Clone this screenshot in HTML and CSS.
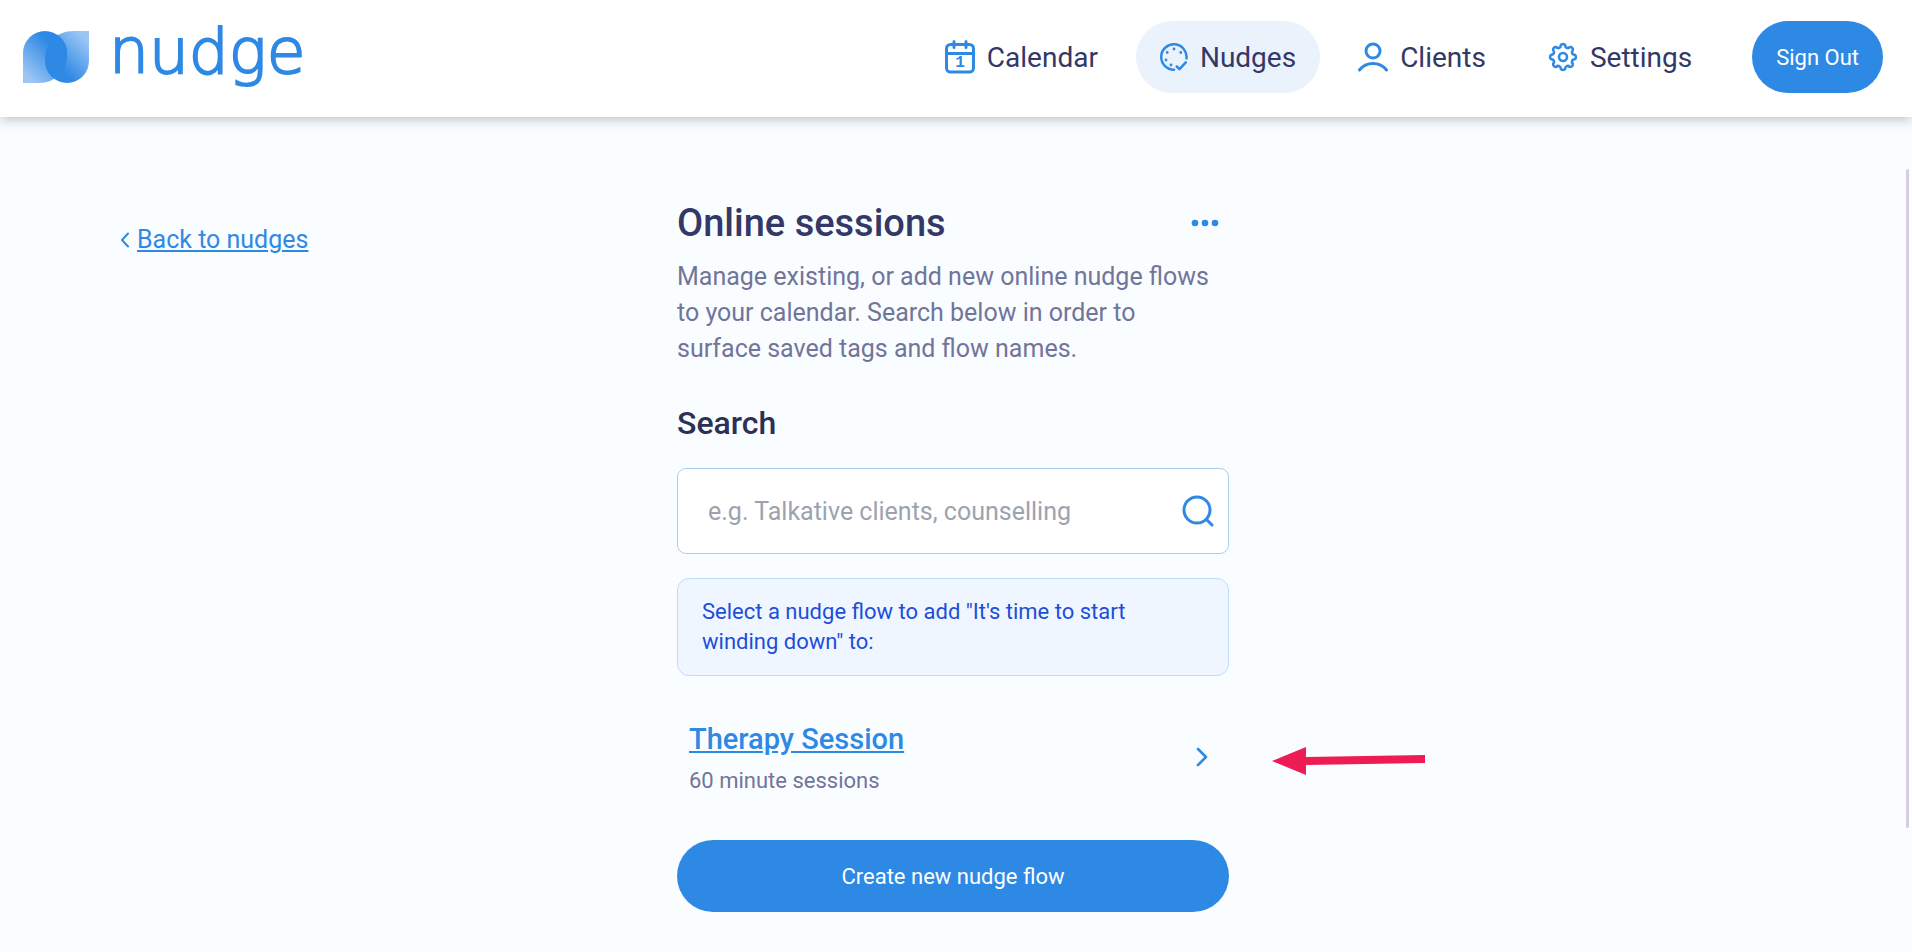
FILE: index.html
```html
<!DOCTYPE html>
<html lang="en">
<head>
    <meta charset="UTF-8">
    <meta name="viewport" content="width=device-width, initial-scale=1.0">
    <title>Online sessions - nudge</title>
    <link rel="stylesheet" href="styles.css">
</head>
<body>
    <header class="header">
        <a href="#" class="logo">
            <svg class="logo-mark" viewBox="0 0 66 52" aria-hidden="true">
                <defs>
                    <linearGradient id="fade" x1="34" y1="14" x2="4" y2="44" gradientUnits="userSpaceOnUse">
                        <stop offset="0.1" stop-color="#2e89e5"/>
                        <stop offset="1" stop-color="#9ac5f5"/>
                    </linearGradient>
                    <path id="leaf" d="M0 52V22A22 22 0 0 1 44 22V24C44 40 32 52 16 52Z"/>
                    <clipPath id="leaf-clip"><use href="#leaf"/></clipPath>
                </defs>
                <use href="#leaf" fill="url(#fade)" transform="rotate(180 33 26)"/>
                <use href="#leaf" fill="url(#fade)"/>
                <g clip-path="url(#leaf-clip)">
                    <use href="#leaf" fill="#2e89e5" transform="rotate(180 33 26)"/>
                </g>
            </svg>
            <span class="logo-text">nudge</span>
        </a>
        <nav class="nav">
            <a href="#" class="nav-link">
                <svg class="icon" viewBox="0 0 30 34" width="30" height="34" aria-hidden="true">
                    <rect x="1.5" y="4.5" width="27" height="27.5" rx="4"/>
                    <path d="M1.5 13.5h27M9 1.5v6M21 1.5v6"/>
                    <text x="15" y="27" class="icon-day">1</text>
                </svg>
                Calendar
            </a>
            <a href="#" class="nav-link active">
                <svg class="icon" viewBox="0 0 28 28" width="28" height="28" aria-hidden="true">
                    <path stroke-width="2.5" d="M26.5 15.5A12.7 12.7 0 1 0 14 26.7M16.8 23.5l2.7 2.7 6.3-6.8"/>
                    <path stroke-width="2.8" d="M14 6h.01M7.2 9.5h.01M20.8 9.5h.01M6 17h.01M11 22h.01"/>
                </svg>
                Nudges
            </a>
            <a href="#" class="nav-link">
                <svg class="icon" viewBox="0 0 30 30" width="30" height="30" aria-hidden="true">
                    <circle cx="15" cy="9" r="7"/>
                    <path d="M1.5 28C5 23.5 9.5 21.5 15 21.5S25 23.5 28.5 28"/>
                </svg>
                Clients
            </a>
            <a href="#" class="nav-link">
                <svg class="icon" viewBox="1 1 30 30" width="30" height="30" aria-hidden="true">
                    <path stroke-width="2.6" d="M27.58 13.75A2.5 2.5 0 0 1 27.58 18.25A2.5 2.5 0 0 0 25.78 22.6A2.5 2.5 0 0 1 22.6 25.78A2.5 2.5 0 0 0 18.25 27.58A2.5 2.5 0 0 1 13.75 27.58A2.5 2.5 0 0 0 9.4 25.78A2.5 2.5 0 0 1 6.22 22.6A2.5 2.5 0 0 0 4.42 18.25A2.5 2.5 0 0 1 4.42 13.75A2.5 2.5 0 0 0 6.22 9.4A2.5 2.5 0 0 1 9.4 6.22A2.5 2.5 0 0 0 13.75 4.42A2.5 2.5 0 0 1 18.25 4.42A2.5 2.5 0 0 0 22.6 6.22A2.5 2.5 0 0 1 25.78 9.4A2.5 2.5 0 0 0 27.58 13.75Z"/>
                    <circle cx="16" cy="16" r="4" stroke-width="2.6"/>
                </svg>
                Settings
            </a>
            <button type="button" class="btn btn-signout">Sign Out</button>
        </nav>
    </header>

    <main class="main">
        <div class="side">
            <a href="#" class="back">
                <svg class="icon" viewBox="0 0 8 16" width="8" height="16" aria-hidden="true">
                    <path stroke-width="2" d="M7 1.5L1 8L7 14.5"/>
                </svg>
                <span>Back to nudges</span>
            </a>
        </div>

        <section class="content">
            <div class="title-row">
                <h1>Online sessions</h1>
                <button type="button" class="more" aria-label="More options">
                    <svg viewBox="0 0 28 8" width="28" height="8" aria-hidden="true">
                        <circle cx="4" cy="4" r="3.3"/>
                        <circle cx="14" cy="4" r="3.3"/>
                        <circle cx="24" cy="4" r="3.3"/>
                    </svg>
                </button>
            </div>
            <p class="intro">Manage existing, or add new online nudge flows to your calendar. Search below in order to surface saved tags and flow names.</p>

            <label class="search-label" for="search">Search</label>
            <div class="search-box">
                <input type="text" id="search" placeholder="e.g. Talkative clients, counselling">
                <button type="button" class="search-btn" aria-label="Search">
                    <svg class="icon" viewBox="0 0 32 32" width="32" height="32" aria-hidden="true">
                        <circle cx="15" cy="15" r="13"/>
                        <path d="M24.5 24.5L30 30"/>
                    </svg>
                </button>
            </div>

            <div class="notice">Select a nudge flow to add "It's time to start winding down" to:</div>

            <div class="flow">
                <div>
                    <a href="#" class="flow-name">Therapy Session</a>
                    <p class="flow-info">60 minute sessions</p>
                </div>
                <svg class="icon" viewBox="0 0 12 20" width="12" height="20" aria-hidden="true">
                    <path stroke-width="2.6" d="M2 2L10 10L2 18"/>
                </svg>
                <svg class="pointer" viewBox="0 0 153 30" width="153" height="30" aria-hidden="true">
                    <path d="M0 15L34 1V11L153 9V17L34 19V29Z"/>
                </svg>
            </div>

            <button type="button" class="btn btn-create">Create new nudge flow</button>
        </section>

        <div class="scroll-thumb"></div>
    </main>
</body>
</html>
```
FILE: styles.css
```css
* {
    box-sizing: border-box;
}

body {
    margin: 0;
    min-height: 100vh;
    display: flex;
    flex-direction: column;
    background-color: #fafdff;
    color: #333866;
    font-family: Roboto, "Liberation Sans", sans-serif;
    font-size: 25px;
}

h1, p {
    margin: 0;
}

a {
    color: #2e89e5;
}

button, input {
    font-family: inherit;
}

button {
    border: none;
    cursor: pointer;
}

.icon {
    flex: none;
    fill: none;
    stroke: #2e89e5;
    stroke-width: 3;
    stroke-linecap: round;
    stroke-linejoin: round;
}

.icon-day {
    fill: #2e89e5;
    stroke: none;
    font-family: "Liberation Mono", monospace;
    font-size: 16px;
    font-weight: bold;
    text-anchor: middle;
}

/* header */
.header {
    position: relative;
    display: flex;
    justify-content: space-between;
    align-items: flex-start;
    padding: 21px 29px 24px 23px;
    background-color: #fff;
    box-shadow: 0 2px 12px rgba(0, 0, 0, 0.25);
}

.logo {
    display: flex;
    align-items: center;
    gap: 20px;
    height: 72px;
    text-decoration: none;
}

.logo-mark {
    width: 66px;
    height: 52px;
}

.logo-text {
    padding-bottom: 10px;
    font-family: "DejaVu Sans", "DejaVu Sans Light", sans-serif;
    font-size: 63px;
    font-weight: 200;
    line-height: 62px;
    -webkit-text-stroke: 2px #2e89e5;
}

.nav {
    display: flex;
    align-items: center;
    gap: 14px;
}

.nav-link {
    display: flex;
    align-items: center;
    gap: 12px;
    height: 72px;
    padding: 0 24px;
    border-radius: 36px;
    color: #333866;
    font-size: 28px;
    text-decoration: none;
}

.nav-link.active {
    background-color: #eaf2fc;
}

.btn {
    height: 72px;
    border-radius: 36px;
    background-color: #2e89e5;
    color: #fff;
    font-size: 22px;
}

.btn-signout {
    margin-left: 22px;
    padding: 0 24px;
}

/* page */
.main {
    position: relative;
    flex: 1;
    display: grid;
    grid-template-columns: 1fr 552px 1fr;
    padding: 82px 6px 40px 0;
}

.side {
    padding: 23px 0 0 121px;
}

.back {
    display: inline-flex;
    align-items: center;
    gap: 8px;
    line-height: 36px;
    text-decoration: none;
}

.back span {
    text-decoration: underline;
}

.title-row {
    display: flex;
    justify-content: space-between;
    align-items: center;
    padding-right: 10px;
}

h1 {
    font-size: 38px;
    font-weight: 500;
    line-height: 48px;
}

.more {
    display: flex;
    padding: 0;
    background: none;
    fill: #2e89e5;
}

.intro {
    margin-top: 12px;
    padding-right: 12px;
    color: #71759a;
    line-height: 36px;
}

.search-label {
    display: block;
    margin: 36px 0 25px;
    color: #2c3054;
    font-size: 32px;
    font-weight: 500;
    line-height: 40px;
}

.search-box {
    display: flex;
    align-items: center;
    height: 86px;
    padding: 0 14px 0 30px;
    border: 1px solid #abceef;
    border-radius: 9px;
    background-color: #fff;
}

.search-box input {
    flex: 1;
    min-width: 0;
    padding: 0;
    border: none;
    outline: none;
    background: none;
    color: #333866;
    font-size: 25px;
}

.search-box input::placeholder {
    color: #9ca3af;
}

.search-btn {
    display: flex;
    padding: 0;
    background: none;
}

.notice {
    margin-top: 24px;
    padding: 18px 24px;
    border: 1px solid #bfdbfe;
    border-radius: 12px;
    background-color: #eff6ff;
    color: #1d4ed8;
    font-size: 22px;
    line-height: 30px;
}

.flow {
    position: relative;
    display: flex;
    justify-content: space-between;
    align-items: center;
    margin: 42px 0 44px;
    padding: 0 21px 0 12px;
}

.flow-name {
    display: block;
    font-size: 29px;
    font-weight: 500;
    line-height: 42px;
}

.flow-info {
    margin-top: 6px;
    color: #71759a;
    font-size: 22px;
    line-height: 30px;
}

/* red arrow beside the flow */
.pointer {
    position: absolute;
    top: 28px;
    left: calc(100% + 43px);
    fill: #ee1c54;
}

.btn-create {
    width: 100%;
}

.scroll-thumb {
    position: absolute;
    top: 52px;
    right: 3px;
    bottom: 124px;
    width: 3px;
    border-radius: 2px;
    background-color: #d8cce5;
}
```
